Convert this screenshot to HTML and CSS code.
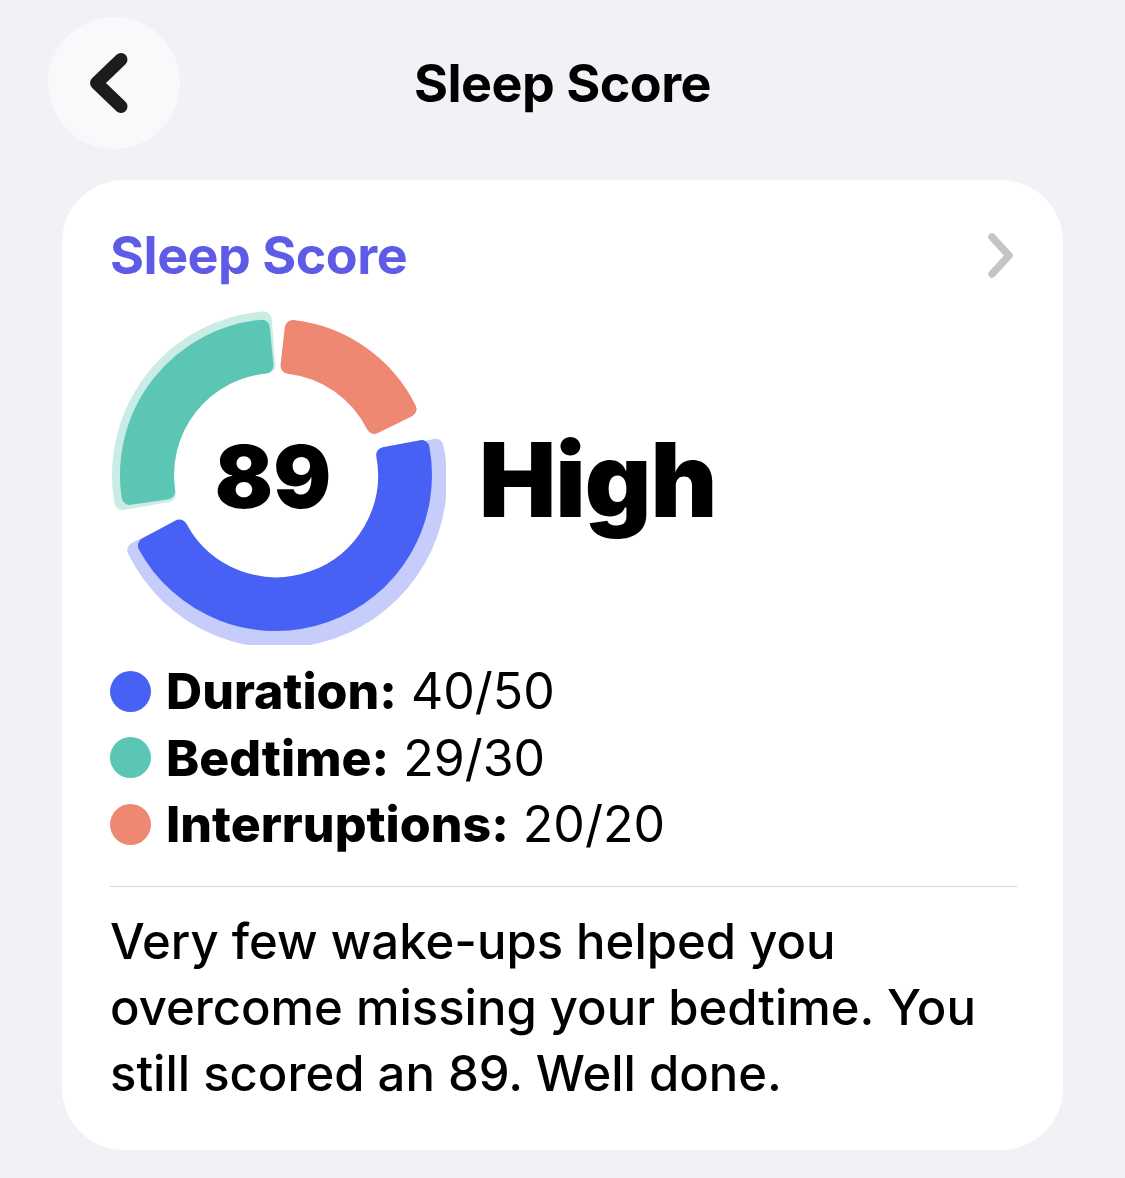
FILE: index.html
```html
<!DOCTYPE html>
<html>
<head>
    <title>Sleep Score</title>
    <meta charset="utf-8">
    <link rel="stylesheet" href="styles.css">
</head>
<body>
    <div class="topbar">
        <button class="back-btn" aria-label="Back">
            <svg width="50" height="70" viewBox="0 0 50 70">
                <path d="M36 11.5 L11.5 35 L36 58.5" fill="none" stroke="#1c1c1e" stroke-width="13" stroke-linecap="round" stroke-linejoin="round"/>
            </svg>
        </button>
        <h1 class="page-title">Sleep Score</h1>
        <div></div>
    </div>

    <div class="card">
        <div class="card-header">
            <h2 class="card-title">Sleep Score</h2>
            <svg class="chevron" width="30" height="50" viewBox="0 0 30 50">
                <path d="M7 6 L24 24.5 L7 43" fill="none" stroke="#c4c4c7" stroke-width="7.5" stroke-linecap="round" stroke-linejoin="round"/>
            </svg>
        </div>

        <div class="score-row">
            <div class="donut">
                <svg width="340" height="340" viewBox="0 0 340 340">
                    <g transform="translate(170 170)" stroke-width="16" stroke-linejoin="round">
                        <!-- soft halos behind the blue and teal parts -->
                        <path transform="translate(3 5)" fill="#c6cdfa" stroke="#c6cdfa" d="M156.5 -33.3 A160 160 0 0 1 -143.8 70.1 L-98.9 48.2 A110 110 0 0 0 107.6 -22.9 Z"/>
                        <path fill="#c9ece4" stroke="#c9ece4" d="M-153.6 27.1 A156 156 0 0 1 -12.3 -155.5 L-8.6 -109.7 A110 110 0 0 0 -108.3 19.1 Z"/>
                        <!-- interruptions -->
                        <path fill="#ee8872" stroke="#ee8872" d="M16.8 -147.1 A148 148 0 0 1 132.5 -66.0 L98.4 -49.1 A110 110 0 0 0 12.5 -109.3 Z"/>
                        <!-- duration -->
                        <path fill="#4761f4" stroke="#4761f4" d="M145.5 -27.0 A148 148 0 0 1 -130.1 70.6 L-96.7 52.5 A110 110 0 0 0 108.2 -20.0 Z"/>
                        <!-- bedtime -->
                        <path fill="#5bc6b4" stroke="#5bc6b4" d="M-146.4 21.9 A148 148 0 0 1 -14.2 -147.3 L-10.5 -109.5 A110 110 0 0 0 -108.8 16.3 Z"/>
                    </g>
                </svg>
                <div class="donut-value">89</div>
            </div>
            <div class="score-label">High</div>
        </div>

        <ul class="legend">
            <li><span class="dot dot-duration"></span><strong>Duration:</strong> 40/50</li>
            <li><span class="dot dot-bedtime"></span><strong>Bedtime:</strong> 29/30</li>
            <li><span class="dot dot-interruptions"></span><strong>Interruptions:</strong> 20/20</li>
        </ul>

        <p class="summary">Very few wake-ups helped you overcome missing your bedtime. You still scored an 89. Well done.</p>
    </div>
</body>
</html>
```

FILE: styles.css
```css
body {
    margin: 0;
    padding: 17px 62px 28px;
    background-color: #f1f1f6;
    font-family: Inter, "Open Sans", sans-serif;
    color: #000;
}
.topbar {
    display: grid;
    grid-template-columns: 1fr auto 1fr;
    align-items: center;
    height: 132px;
    margin-left: -14px;
}
.back-btn {
    width: 132px;
    height: 132px;
    border-radius: 50%;
    border: none;
    background-color: #f9f9fb;
    display: flex;
    align-items: center;
    justify-content: center;
    padding: 0 8px 0 0;
    cursor: pointer;
}
.page-title {
    margin: 0;
    font-size: 52px;
    font-weight: 700;
    letter-spacing: -0.5px;
    position: relative;
    left: 7px;
}
.card {
    margin-top: 31px;
    background-color: #fff;
    border-radius: 62px;
    padding: 44px 46px 50px 48px;
    box-sizing: border-box;
    height: 970px;
}
.card-header {
    display: flex;
    justify-content: space-between;
    align-items: center;
}
.card-title {
    margin: 0;
    font-size: 52px;
    font-weight: 700;
    letter-spacing: -0.5px;
    color: #5e5ce6;
}
.chevron {
    margin-right: 2px;
}
.score-row {
    display: flex;
    align-items: center;
    margin-top: 18px;
}
.donut {
    position: relative;
    width: 340px;
    height: 340px;
    margin-left: -4px;
}
.donut svg {
    display: block;
}
.donut-value {
    position: absolute;
    left: 0;
    right: 0;
    top: 0;
    bottom: 0;
    display: flex;
    align-items: center;
    justify-content: center;
    font-size: 86px;
    font-weight: 900;
    padding: 4px 6px 0 0;
}
.score-label {
    font-size: 103px;
    font-weight: 900;
    letter-spacing: -1px;
    margin-left: 33px;
    margin-top: 8px;
}
.legend {
    list-style: none;
    margin: 13px 0 0;
    padding: 0;
    font-size: 50px;
}
.legend li {
    display: flex;
    align-items: center;
    height: 66.5px;
    white-space: pre;
}
.legend strong {
    font-weight: 800;
}
.dot {
    width: 41px;
    height: 41px;
    border-radius: 50%;
    margin-right: 15px;
}
.dot-duration {
    background-color: #4761f4;
}
.dot-bedtime {
    background-color: #5bc6b4;
}
.dot-interruptions {
    background-color: #ee8872;
}
.summary {
    margin: 28px 0 0;
    padding-top: 22px;
    border-top: 1.5px solid #d6d6d8;
    font-size: 49px;
    line-height: 66px;
    font-weight: 500;
}
```
